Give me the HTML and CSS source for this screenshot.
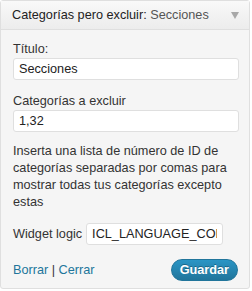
FILE: index.html
```html
<!DOCTYPE html>
<html lang="es">
<head>
    <meta charset="UTF-8">
    <title>Widget</title>
    <link rel="stylesheet" href="styles.css">
</head>
<body>

    <!-- Widget box -->
    <div class="widget">
        <div class="widget-top">
            <h4><strong>Categorías pero excluir:</strong> <span class="in-title">Secciones</span></h4>
            <span class="arrow"></span>
        </div>

        <div class="widget-inside">
            <p class="field">
                <label for="title">Título:</label>
                <input type="text" id="title" value="Secciones">
            </p>
            <p class="field">
                <label for="exclude">Categorías a excluir</label>
                <input type="text" id="exclude" value="1,32">
            </p>
            <p class="help">Inserta una lista de número de ID de categorías separadas por comas para mostrar todas tus categorías excepto estas</p>
            <p class="logic">
                <label for="logic">Widget logic</label>
                <input type="text" id="logic" value="ICL_LANGUAGE_CODE">
            </p>

            <div class="widget-control">
                <div class="links"><a href="#">Borrar</a> | <a href="#">Cerrar</a></div>
                <button>Guardar</button>
            </div>
        </div>
    </div>

</body>
</html>
```

FILE: styles.css
```css
/* General */
body {
    margin: 0;
    font-family: "Liberation Sans", Arial, sans-serif;
    font-size: 12.7px;
    color: #333;
    background: #fff;
}

.widget {
    width: 248px;
    border: 1px solid #dfdfdf;
    border-radius: 3px;
    background: #f5f5f5;
}

/* Header */
.widget-top {
    display: flex;
    align-items: center;
    justify-content: space-between;
    height: 28px;
    padding: 0 10px 0 11px;
    background: linear-gradient(to bottom, #f9f9f9, #ececec);
    border-bottom: 1px solid #dfdfdf;
}

.widget-top h4 {
    margin: 0;
    font-size: 12.7px;
    font-weight: normal;
    color: #222;
}

.widget-top strong {
    font-weight: normal;
    color: #222;
}

.in-title {
    color: #555;
}

.arrow {
    width: 0;
    height: 0;
    border-left: 4px solid transparent;
    border-right: 4px solid transparent;
    border-top: 7px solid #a8a8a8;
}

/* Form */
.widget-inside {
    padding: 11px 10px 7px 12px;
}

.widget-inside p {
    margin: 0;
}

.field label {
    display: block;
    line-height: 17px;
}

input {
    display: block;
    box-sizing: border-box;
    width: 226px;
    height: 22px;
    padding: 2px 5px;
    font-family: "Liberation Sans", Arial, sans-serif;
    font-size: 12.7px;
    color: #222;
    background: #fff;
    border: 1px solid #dfdfdf;
    border-radius: 3px;
}

.field {
    margin-bottom: 13px !important;
}

.help {
    line-height: 17px;
    margin-top: -2px !important;
    margin-bottom: 12px !important;
}

.logic {
    display: flex;
    align-items: center;
    gap: 4px;
}

.logic input {
    width: 137px;
}

/* Footer */
.widget-control {
    display: flex;
    align-items: center;
    justify-content: space-between;
    margin-top: 14px;
    padding-right: 1px;
}

.links {
    color: #333;
}

.links a {
    color: #21759b;
    text-decoration: none;
}

button {
    display: block;
    height: 22px;
    padding: 0 8px;
    font-family: "Liberation Sans", Arial, sans-serif;
    font-size: 12.7px;
    font-weight: bold;
    color: #fff;
    text-shadow: 0 -1px 0 rgba(0, 0, 0, 0.3);
    background: linear-gradient(to bottom, #2a95c5, #21759b);
    border: 1px solid #21759b;
    border-radius: 11px;
}
```
